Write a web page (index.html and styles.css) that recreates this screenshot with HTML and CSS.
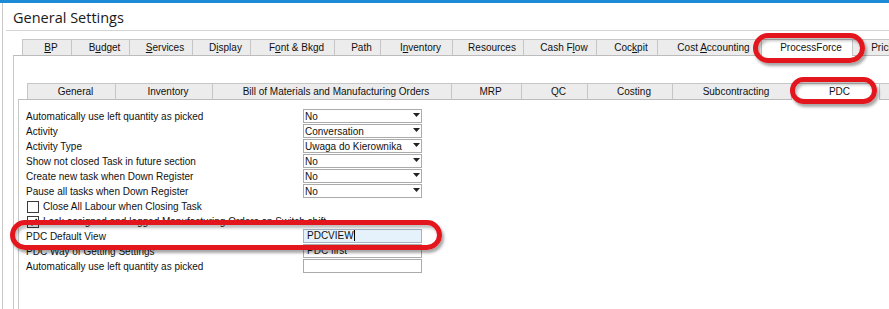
FILE: index.html
```html
<!DOCTYPE html>
<html>
<head>
<meta charset="utf-8">
<title>General Settings</title>
<link rel="stylesheet" href="styles.css">
</head>
<body>
<div class="topbar"></div>
<div class="window">
  <div class="title">General Settings</div>
  <div class="content">
    <div class="tabs main-tabs">
      <div class="tab"><u>B</u>P</div>
      <div class="tab">B<u>u</u>dget</div>
      <div class="tab"><u>S</u>ervices</div>
      <div class="tab">D<u>i</u>splay</div>
      <div class="tab">F<u>o</u>nt &amp; Bkgd</div>
      <div class="tab">Path</div>
      <div class="tab">I<u>n</u>ventory</div>
      <div class="tab">Resources</div>
      <div class="tab">Cash F<u>l</u>ow</div>
      <div class="tab">Coc<u>k</u>pit</div>
      <div class="tab">Cost <u>A</u>ccounting</div>
      <div class="tab active">ProcessForce</div>
      <div class="tab">Pricing</div>
    </div>
    <div class="panel">
      <div class="tabs sub-tabs">
        <div class="tab">General</div>
        <div class="tab">Inventory</div>
        <div class="tab">Bill of Materials and Manufacturing Orders</div>
        <div class="tab">MRP</div>
        <div class="tab">QC</div>
        <div class="tab">Costing</div>
        <div class="tab">Subcontracting</div>
        <div class="tab active">PDC</div>
        <div class="tab"></div>
      </div>
      <div class="subpanel">
        <div class="form">
          <div class="label">Automatically use left quantity as picked</div>
          <div class="select"><span>No</span><span class="arrow"></span></div>
          <div class="label">Activity</div>
          <div class="select"><span>Conversation</span><span class="arrow"></span></div>
          <div class="label">Activity Type</div>
          <div class="select"><span>Uwaga do Kierownika</span><span class="arrow"></span></div>
          <div class="label">Show not closed Task in future section</div>
          <div class="select"><span>No</span><span class="arrow"></span></div>
          <div class="label">Create new task when Down Register</div>
          <div class="select"><span>No</span><span class="arrow"></span></div>
          <div class="label">Pause all tasks when Down Register</div>
          <div class="select"><span>No</span><span class="arrow"></span></div>
          <div class="checkrow"><span class="cb"></span><span>Close All Labour when Closing Task</span></div>
          <div class="checkrow"><span class="cb"><svg width="10" height="10" viewBox="0 0 10 10"><path d="M1.5 5.2 L4 7.8 L8.7 2" fill="none" stroke="#222" stroke-width="1.6"/></svg></span><span>Lock assigned and logged Manufacturing Orders on Switch shift</span></div>
          <div class="label">PDC Default View</div>
          <div class="input focus"><span>PDCVIEW</span><span class="caret"></span></div>
          <div class="label">PDC Way of Getting Settings</div>
          <div class="input"><span>PDC first</span></div>
          <div class="label">Automatically use left quantity as picked</div>
          <div class="input"></div>
        </div>
      </div>
    </div>
  </div>
</div>
<div class="mark mark-pf"></div>
<div class="mark mark-pdc"></div>
<div class="mark mark-view"></div>
</body>
</html>
```

FILE: styles.css
```css
* { box-sizing: border-box; }
html, body { margin: 0; padding: 0; background: #fff; overflow: hidden; }
body {
  width: 889px;
  height: 309px;
  position: relative;
  font-family: "Liberation Sans", Arial, sans-serif;
  font-size: 10px;
  color: #111;
}
.topbar { height: 3px; background: #1c8ad6; }
.window {
  margin-left: 2px;
  border-left: 1px solid #c9c9c9;
  height: 306px;
}
.title {
  margin-left: 3px;
  padding-left: 7px;
  padding-top: 2px;
  height: 28px;
  border-bottom: 1px solid #d5d5d5;
  font-family: "Open Sans", "Noto Sans", sans-serif;
  font-size: 14.5px;
  line-height: 25px;
  color: #1a1a1a;
}
.content { padding: 8px 0 0 10px; }

.tabs { display: grid; grid-auto-rows: 16px; }
.main-tabs {
  margin-left: 9px;
  grid-template-columns: 50px 58px 63px 58px 84px 46px 72px 71px 73px 61px 104px 91px 60px;
}
.sub-tabs {
  margin-left: 9px;
  grid-template-columns: 89px 97px 239px 70px 66px 85px 119px 88px 200px;
}
.tab {
  border-top: 1px solid #c6c6c6;
  border-right: 1px solid #c6c6c6;
  background: #ececec;
  text-align: center;
  padding-left: 8px;
  line-height: 15px;
  white-space: nowrap;
  overflow: hidden;
  color: #111;
}
.tab:first-child { border-left: 1px solid #c6c6c6; }
.tab u { text-decoration: underline; text-underline-offset: 1px; }
.tab.active {
  background: #fff;
  height: 17px;
  position: relative;
  z-index: 1;
}

.panel {
  border-left: 1px solid #c8c8c8;
  border-top: 1px solid #bcbcbc;
  padding: 27px 0 0 4px;
  height: 260px;
}
.subpanel {
  border-left: 1px solid #c8c8c8;
  border-top: 1px solid #bcbcbc;
  padding: 9px 0 0 7px;
  height: 220px;
}
.form {
  display: grid;
  grid-template-columns: 277px 119px;
  grid-auto-rows: 14px;
  row-gap: 1px;
}
.label { line-height: 14px; padding-top: 1px; white-space: nowrap; }
.select, .input {
  border: 1px solid #ababab;
  display: flex;
  align-items: flex-start;
  padding-left: 1px;
  padding-top: 1px;
  line-height: 12px;
  white-space: nowrap;
  background: #fff;
}
.arrow {
  margin-left: auto;
  margin-right: 1px;
  margin-top: 2px;
  width: 7px;
  height: 4px;
  background: #222;
  clip-path: polygon(0 0, 100% 0, 50% 100%);
}
.input { padding-left: 3px; padding-top: 0; }
.input.focus { background: #e6f2fb; border-color: #a6b4c2; }
.caret {
  display: inline-block;
  width: 1px;
  height: 11px;
  background: #000;
}
.checkrow {
  grid-column: 1 / -1;
  display: flex;
  align-items: center;
  gap: 4px;
  padding-top: 1px;
  white-space: nowrap;
}
.cb {
  width: 12px;
  height: 12px;
  margin-left: 1px;
  border: 1px solid #3a3a3a;
  background: #fff;
  display: flex;
  align-items: center;
  justify-content: center;
}

.mark {
  position: absolute;
  border: 5px solid #e3151d;
  border-radius: 999px;
  box-shadow: 2px 3px 3px rgba(0,0,0,0.35), inset 2px 3px 3px rgba(0,0,0,0.25);
  z-index: 5;
}
.mark-pf { left: 753px; top: 33px; width: 112px; height: 30px; }
.mark-pdc { left: 790px; top: 77px; width: 87px; height: 27px; }
.mark-view { left: 10px; top: 220px; width: 432px; height: 30px; }
```
